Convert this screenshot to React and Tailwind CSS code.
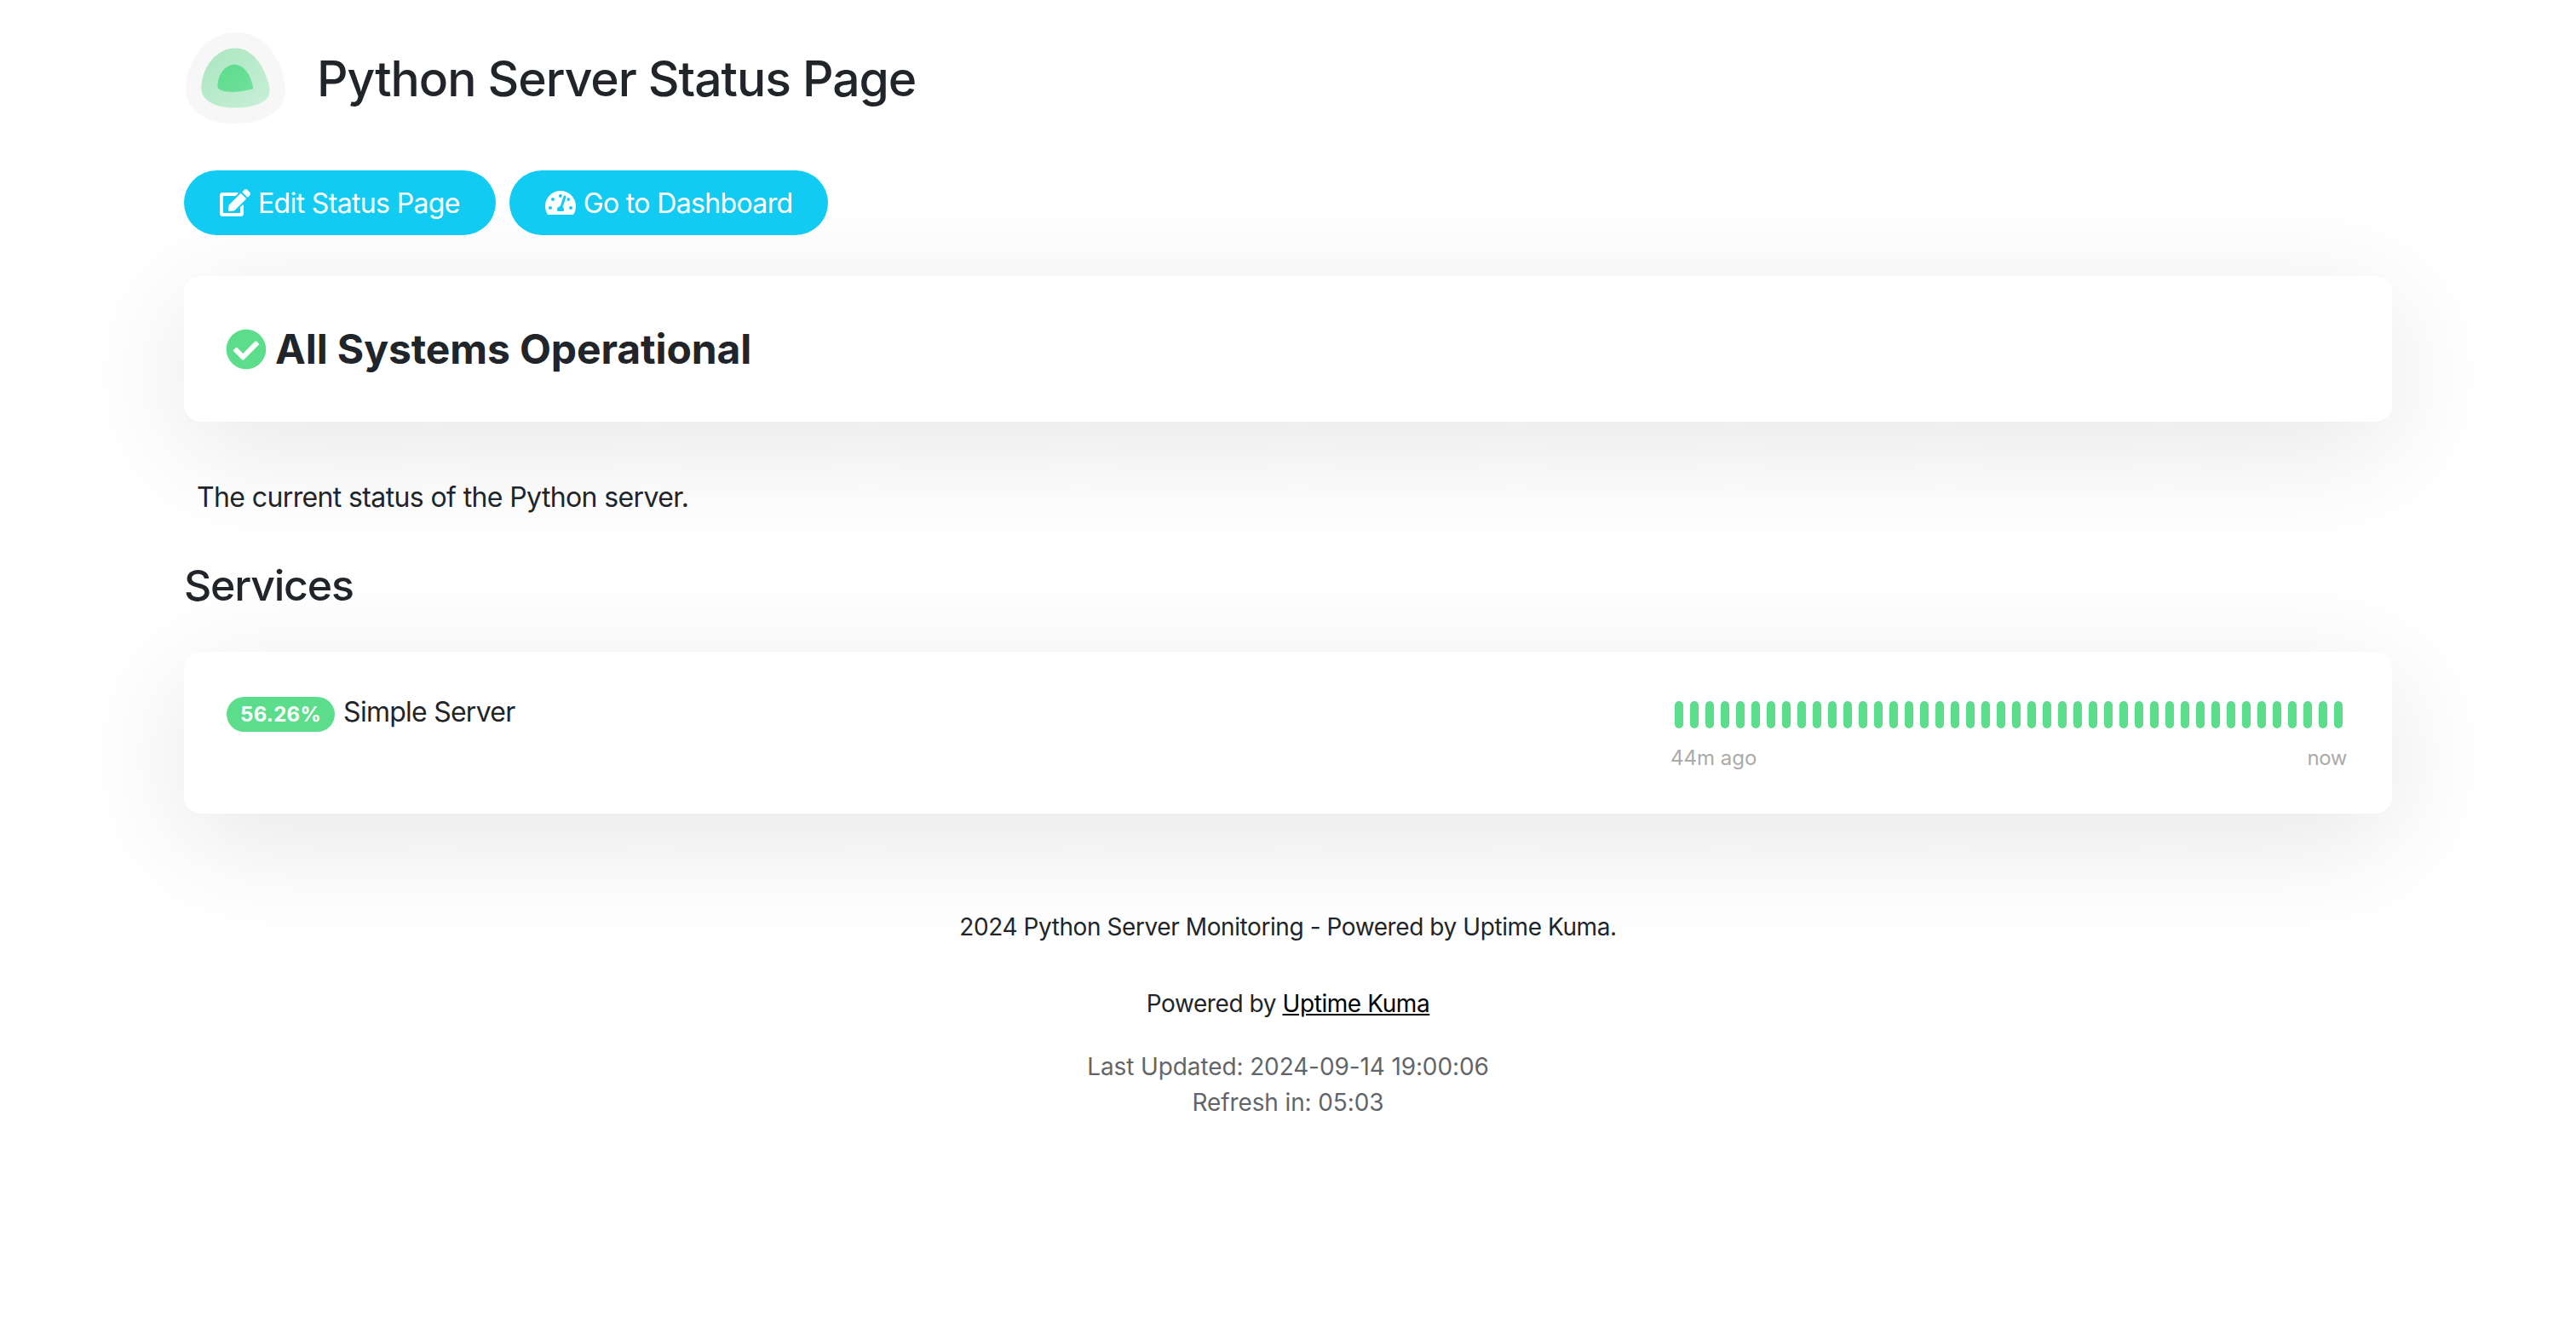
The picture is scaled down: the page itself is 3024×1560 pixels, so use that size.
import { FaCheckCircle, FaEdit, FaTachometerAlt } from "react-icons/fa";

const beats = Array.from({ length: 44 }, (_, i) => i);

const Logo = () => (
  <svg viewBox="53 55 350 320" className="w-[117px] h-[107px] ml-[2px] shrink-0">
    <defs>
      <linearGradient id="mid" x1="0" y1="0" x2="1" y2="1">
        <stop offset="0" stopColor="#a9e6bf" />
        <stop offset="1" stopColor="#c8efd8" />
      </linearGradient>
      <linearGradient id="inner" x1="0" y1="0" x2="1" y2="1">
        <stop offset="0" stopColor="#5cdd8b" />
        <stop offset="1" stopColor="#70e09c" />
      </linearGradient>
    </defs>
    <path fill="#f7f7f7" d="M228 55C310 55 360 110 385 175C398 212 403 235 403 260C403 335 320 375 225 375C130 375 53 335 53 255C53 150 130 55 228 55Z" />
    <path fill="url(#mid)" d="M228 110C275 110 310 150 330 195C342 225 348 245 348 262C348 300 290 320 225 320C165 320 108 300 108 250C108 180 160 110 228 110Z" />
    <path fill="url(#inner)" d="M225 168C262 168 285 215 290 253C265 260 240 264 215 264C190 264 165 258 165 245C165 205 190 168 225 168Z" />
  </svg>
);

const Button = ({ icon, children }) => (
  <a className="flex items-center gap-[9px] h-[76px] px-[42px] rounded-full bg-[#12cbf2] text-white text-[32px] tracking-[-0.65px]">
    {icon}
    <span className="pt-[2px]">{children}</span>
  </a>
);

export default function App() {
  return (
    <div className="min-h-[1560px] bg-white text-[#212529] font-['Inter',sans-serif]">
      <div className="w-[2592px] mx-auto pt-[38px]">
        <div className="flex items-center">
          <Logo />
          <h1 className="ml-[37px] pt-[3px] text-[57px] leading-[72px] font-[550] tracking-[-1.05px]">Python Server Status Page</h1>
        </div>

        <div className="flex gap-[16px] mt-[55px]">
          <Button icon={<FaEdit className="w-[36px] h-[32px]" />}>Edit Status Page</Button>
          <Button icon={<FaTachometerAlt className="w-[36px] h-[32px]" />}>Go to Dashboard</Button>
        </div>

        <div className="flex items-center gap-[10px] h-[171px] mt-[48px] pl-[49px] rounded-[20px] bg-white shadow-[0_30px_140px_rgba(0,0,0,0.1)]">
          <FaCheckCircle className="w-[48px] h-[48px] text-[#5cdd8b]" />
          <h4 className="text-[48px] leading-[58px] font-bold tracking-[-0.1px]">All Systems Operational</h4>
        </div>

        <p className="mt-[65px] ml-[15px] text-[32px] leading-[48px] tracking-[-0.62px]">The current status of the Python server.</p>

        <h2 className="mt-[48px] text-[50px] leading-[62px] font-[550] tracking-[-1.2px]">Services</h2>

        <div className="flex justify-between h-[190px] mt-[47px] pl-[50px] pr-[53px] rounded-[20px] bg-white shadow-[0_30px_140px_rgba(0,0,0,0.1)]">
          <div className="flex items-start gap-[10px] pt-[53px]">
            <span className="flex items-center h-[41px] px-[16px] rounded-full bg-[#5cdd8b] text-white text-[24px] font-bold tracking-[0.3px]">56.26%</span>
            <span className="text-[32px] leading-[36px] tracking-[-0.75px]">Simple Server</span>
          </div>
          <div className="w-[794px] pt-[58px]">
            <div className="flex gap-[8px] pl-[5px]">
              {beats.map((b) => (
                <div key={b} className="w-[10px] h-[32px] rounded-full bg-[#5cdd8b]" />
              ))}
            </div>
            <div className="flex justify-between mt-[21px] text-[24px] leading-[28px] text-[#aaaaaa]">
              <span>44m ago</span>
              <span className="tracking-[-0.4px]">now</span>
            </div>
          </div>
        </div>

        <div className="mt-[112px] text-center text-[28px] leading-[42px] tracking-[-0.42px]">
          <p>2024 Python Server Monitoring - Powered by Uptime Kuma.</p>
          <p className="mt-[48px]">
            Powered by <a className="underline text-black">Uptime Kuma</a>
          </p>
          <div className="mt-[32px] opacity-70 tracking-[-0.12px]">
            <p>Last Updated: 2024-09-14 19:00:06</p>
            <p>Refresh in: 05:03</p>
          </div>
        </div>
      </div>
    </div>
  );
}
